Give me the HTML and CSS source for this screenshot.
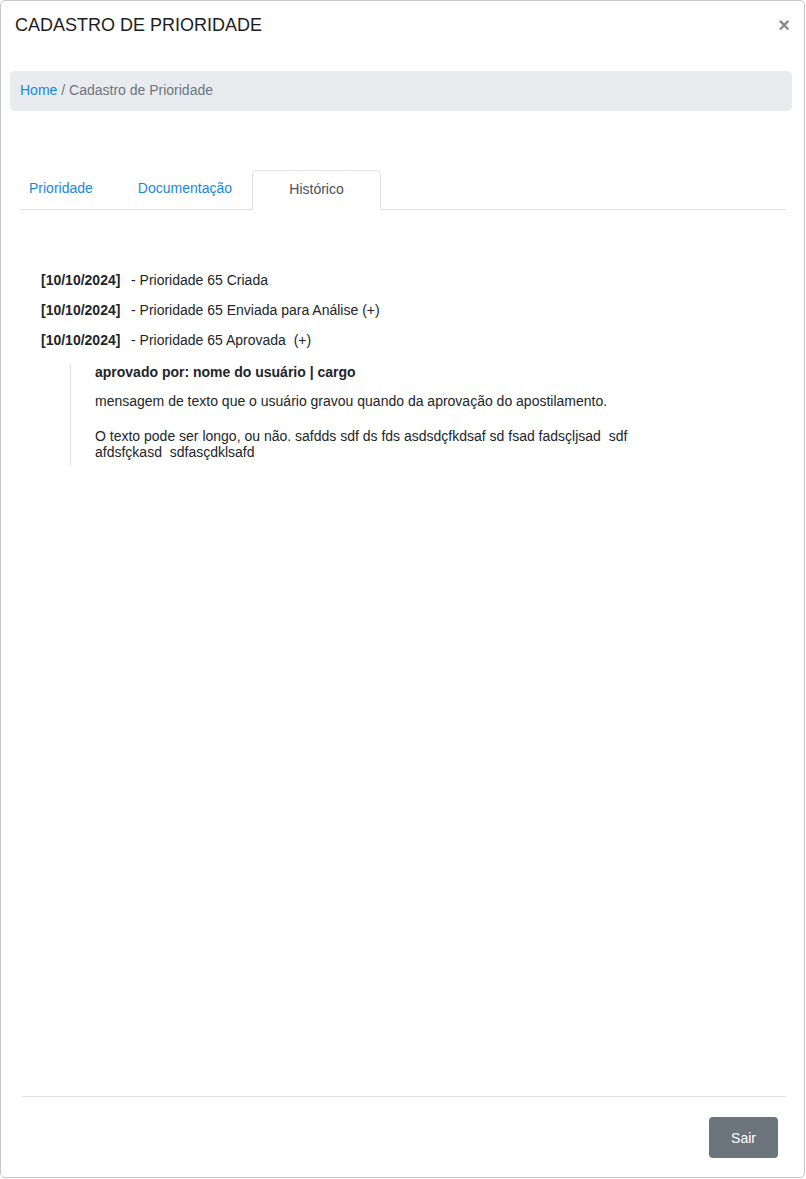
FILE: index.html
```html
<!DOCTYPE html>
<html lang="pt-BR">
<head>
<meta charset="utf-8">
<title>Cadastro de Prioridade</title>
<link rel="stylesheet" href="styles.css">
</head>
<body>
<div class="modal">
  <div class="modal-header">
    <h1 class="modal-title">CADASTRO DE PRIORIDADE</h1>
    <span class="close">&times;</span>
  </div>
  <div class="modal-body">
    <nav class="breadcrumb">
      <a class="crumb-link" href="#">Home</a><span class="crumb-sep">&nbsp;/&nbsp;</span><span class="crumb-current">Cadastro de Prioridade</span>
    </nav>
    <div class="tabs">
      <a class="tab tab-first" href="#">Prioridade</a>
      <a class="tab tab-doc" href="#">Documentação</a>
      <a class="tab tab-active" href="#">Histórico</a>
    </div>
    <div class="history">
      <div class="item"><span class="date">[10/10/2024]</span>- Prioridade 65 Criada</div>
      <div class="item"><span class="date">[10/10/2024]</span>- Prioridade 65 Enviada para Análise (+)</div>
      <div class="item"><span class="date">[10/10/2024]</span>- Prioridade 65 Aprovada&nbsp; (+)</div>
      <blockquote class="detail">
        <p class="detail-title">aprovado por: nome do usuário | cargo</p>
        <p class="detail-msg">mensagem de texto que o usuário gravou quando da aprovação do apostilamento.</p>
        <p class="detail-text">O texto pode ser longo, ou não. safdds sdf ds fds asdsdçfkdsaf sd fsad fadsçljsad&nbsp; sdf afdsfçkasd&nbsp; sdfasçdklsafd</p>
      </blockquote>
    </div>
  </div>
  <div class="modal-footer">
    <div class="footer-line"></div>
    <div class="footer-actions">
      <button class="btn">Sair</button>
    </div>
  </div>
</div>
</body>
</html>
```

FILE: styles.css
```css
* { box-sizing: border-box; }
html, body {
  margin: 0;
  padding: 0;
  background: #fff;
}
body {
  font-family: "Liberation Sans", Arial, sans-serif;
  font-size: 14px;
  color: #212529;
}
.modal {
  width: 805px;
  height: 1178px;
  border: 1px solid #c9c9c9;
  border-radius: 5px;
  display: flex;
  flex-direction: column;
  background: #fff;
}
.modal-header {
  display: flex;
  align-items: center;
  justify-content: space-between;
  height: 48px;
  padding: 0 14px 0 14px;
}
.modal-title {
  margin: 0;
  font-size: 18px;
  font-weight: normal;
  color: #1d1d1d;
  letter-spacing: 0;
}
.close {
  font-size: 20px;
  font-weight: bold;
  color: #8a8a8a;
  line-height: 1;
  margin-top: -1px;
}
.modal-body {
  flex: 1;
  padding: 22px 12px 0 9px;
}
.breadcrumb {
  background: #e9ecef;
  border-radius: 5px;
  height: 40px;
  display: flex;
  align-items: center;
  padding: 0 10px 2px;
  line-height: 16px;
}
.crumb-link {
  color: #1a86dc;
  text-decoration: none;
}
.crumb-sep, .crumb-current { color: #6c757d; }
.tabs {
  margin: 59px 6px 0 10px;
  display: flex;
  align-items: flex-end;
  border-bottom: 1px solid #dee2e6;
  height: 40px;
}
.tab {
  display: block;
  text-decoration: none;
  color: #1a86dc;
  line-height: 16px;
  padding: 9px 9px 13px;
}
.tab-doc { margin-left: 27px; }
.tab-active {
  margin-left: 11px;
  width: 129px;
  height: 40px;
  margin-bottom: -1px;
  text-align: center;
  color: #495057;
  background: #fff;
  border: 1px solid #dee2e6;
  border-bottom-color: #fff;
  border-radius: 5px 5px 0 0;
  padding-top: 10px;
}
.history {
  padding: 62px 0 0 31px;
}
.item {
  line-height: 16px;
  margin-bottom: 14px;
}
.date {
  display: inline-block;
  width: 90px;
  font-weight: bold;
}
.detail {
  margin: 16px 0 0 29px;
  border-left: 1px solid #dee2e6;
  padding: 0 0 5px 24px;
}
.detail p {
  margin: 0;
  line-height: 16px;
}
.detail-title { font-weight: bold; }
.detail-msg { margin-top: 13px !important; }
.detail-text { margin-top: 19px !important; width: 560px; }
.modal-footer {
  display: flex;
  flex-direction: column;
}
.footer-line {
  height: 1px;
  background: #dee2e6;
  margin: 0 18px 0 21px;
}
.footer-actions {
  display: flex;
  justify-content: flex-end;
  padding: 20px 26px 19px 0;
}
.btn {
  width: 69px;
  height: 41px;
  border: none;
  border-radius: 4px;
  background: #6c757d;
  color: #fff;
  font-family: "Liberation Sans", Arial, sans-serif;
  font-size: 14px;
}
```
